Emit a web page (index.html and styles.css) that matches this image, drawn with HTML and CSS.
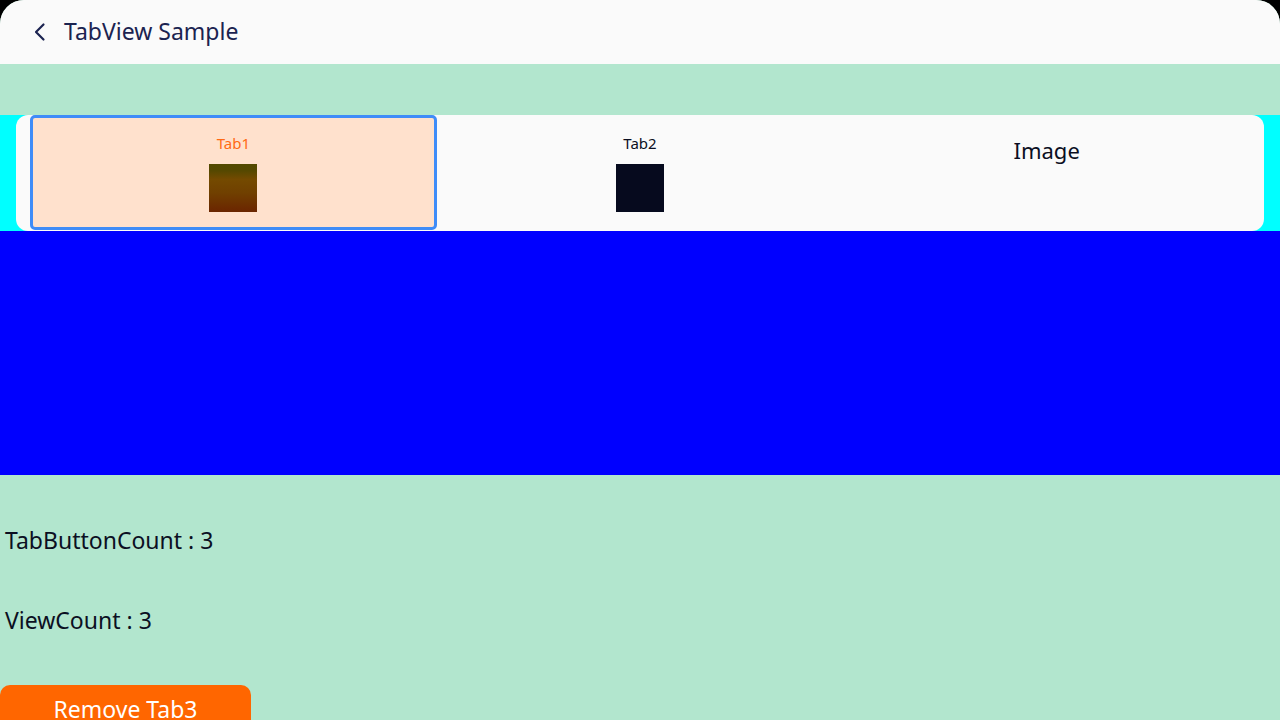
FILE: index.html
```html
<!DOCTYPE html>
<html>
<head>
<meta charset="utf-8">
<link rel="stylesheet" href="styles.css">
</head>
<body>
<div class="app">
  <header class="header">
    <svg class="back" width="24" height="24" viewBox="0 0 24 24"><path d="M15.5 4.5 L8 12 L15.5 19.5" fill="none" stroke="#1b2350" stroke-width="2.2" stroke-linecap="round" stroke-linejoin="round"/></svg>
    <span class="title">TabView Sample</span>
  </header>
  <div class="spacer"></div>
  <div class="tabband">
    <div class="tabbar">
      <div class="tab selected">
        <span class="tab-label">Tab1</span>
        <div class="tab-icon icon1"></div>
      </div>
      <div class="tab">
        <span class="tab-label">Tab2</span>
        <div class="tab-icon icon2"></div>
      </div>
      <div class="tab image-tab">
        <span class="tab-big">Image</span>
      </div>
    </div>
  </div>
  <div class="content"></div>
  <div class="info">
    <div class="line">TabButtonCount : 3</div>
    <div class="line">ViewCount : 3</div>
    <button class="remove">Remove Tab3</button>
  </div>
</div>
</body>
</html>
```
FILE: styles.css
```css
html, body {
  margin: 0;
  padding: 0;
  background: #000;
}
body {
  width: 1280px;
  height: 720px;
  overflow: hidden;
  font-family: "Noto Sans", "Open Sans", sans-serif;
}
.app {
  display: flex;
  flex-direction: column;
  height: 720px;
  background: #b2e6ce;
  border-radius: 24px 24px 0 0;
  overflow: hidden;
}
.header {
  height: 64px;
  flex: 0 0 64px;
  background: #fafafa;
  display: flex;
  align-items: center;
  padding-left: 28px;
  box-sizing: border-box;
}
.back {
  display: block;
  margin-right: 12px;
}
.title {
  font-size: 23px;
  color: #1b2350;
  line-height: 1;
  padding-bottom: 2px;
}
.spacer {
  height: 51px;
  flex: 0 0 51px;
}
.tabband {
  height: 116px;
  flex: 0 0 116px;
  background: #00ffff;
  padding: 0 16px;
  box-sizing: border-box;
}
.tabbar {
  height: 116px;
  background: #fafafa;
  border-radius: 12px;
  display: grid;
  grid-template-columns: 1fr 1fr 1fr;
  padding: 0 14px 1px 14px;
  box-sizing: border-box;
}
.tab {
  display: flex;
  flex-direction: column;
  align-items: center;
  padding-top: 18px;
  box-sizing: border-box;
}
.tab.selected {
  background: #ffe1cd;
  border: 3px solid #3f8cf8;
  border-radius: 5px;
  padding-top: 15px;
}
.tab-label {
  font-size: 15px;
  line-height: 20px;
  color: #0b0f22;
}
.selected .tab-label {
  color: #ff6a14;
}
.tab-icon {
  width: 48px;
  height: 48px;
  margin-top: 11px;
}
.icon1 {
  background: linear-gradient(180deg, #534900 0%, #554800 14%, #744a00 32%, #704000 60%, #6b2500 100%);
}
.icon2 {
  background: #060a1e;
}
.image-tab {
  padding-top: 19px;
}
.tab-big {
  font-size: 22px;
  line-height: 32px;
  color: #0b0f22;
}
.content {
  height: 244px;
  flex: 0 0 244px;
  background: #0000ff;
}
.info {
  flex: 1;
  display: flex;
  flex-direction: column;
  align-items: flex-start;
  padding-top: 49px;
}
.line {
  font-size: 23px;
  line-height: 32px;
  color: #0b0f22;
  padding-left: 5px;
  margin-bottom: 48px;
}
.line + .line {
  margin-bottom: 49px;
}
.remove {
  width: 251px;
  height: 48px;
  border: none;
  border-radius: 10px;
  background: #ff6600;
  color: #fff;
  font-family: "Noto Sans", "Open Sans", sans-serif;
  font-size: 23px;
  line-height: 32px;
  padding: 0;
  margin: 0;
}
```
